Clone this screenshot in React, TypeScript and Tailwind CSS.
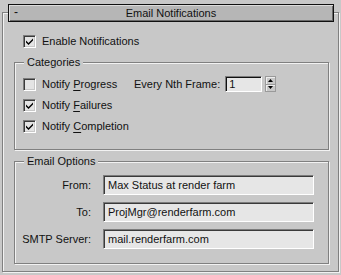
import React from "react";

const FONT = "font-['Liberation_Sans',Arial,sans-serif]";

function CheckBox({ checked }: { checked: boolean }) {
  return (
    <div className="w-[13px] h-[13px] shrink-0 bg-[#e4e4e4] border border-t-[#7c7c7c] border-l-[#7c7c7c] border-b-white border-r-white shadow-[inset_1px_1px_0_#3a3a3a,inset_-1px_-1px_0_#c8c8c8] flex items-center justify-center">
      {checked && (
        <svg width="9" height="9" viewBox="0 0 9 9">
          <path d="M1 3.5 L3.5 6 L8 1.5 L8 3.5 L3.5 8 L1 5.5 Z" fill="#000" />
        </svg>
      )}
    </div>
  );
}

function Option({ checked, before, mnemonic, after }: { checked: boolean; before: string; mnemonic: string; after: string }) {
  return (
    <div className="flex items-center gap-[6px] h-[16px]">
      <CheckBox checked={checked} />
      <span className="leading-none whitespace-nowrap">
        {before}
        {mnemonic && <span className="underline underline-offset-[2px]">{mnemonic}</span>}
        {after}
      </span>
    </div>
  );
}

function GroupBox({ title, className, children }: { title: string; className: string; children: React.ReactNode }) {
  return (
    <div className={`relative ml-[11px] w-[315px] border border-[#808080] shadow-[1px_1px_0_#f2f2f2,inset_1px_1px_0_#f2f2f2] ${className}`}>
      <span className="absolute -top-[7px] left-[9px] px-[3px] bg-[#c8c8c8] leading-[13px]">{title}</span>
      {children}
    </div>
  );
}

function TextField({ value }: { value: string }) {
  return (
    <div className="w-[211px] h-[20px] bg-[#e6e6e6] border border-t-[#7c7c7c] border-l-[#7c7c7c] border-b-white border-r-white shadow-[inset_1px_1px_0_#3a3a3a] flex items-center pl-[4px] leading-none">
      {value}
    </div>
  );
}

const FIELDS = [
  { label: "From:", value: "Max Status at render farm" },
  { label: "To:", value: "ProjMgr@renderfarm.com" },
  { label: "SMTP Server:", value: "mail.renderfarm.com" },
];

export default function App() {
  return (
    <div className={`w-[341px] h-[275px] bg-[#c8c8c8] pt-[12px] pl-[2px] pr-[2px] text-[11px] text-[#111] ${FONT}`}>
      <div className="h-[260px] border border-[#808080] shadow-[1px_1px_0_#f2f2f2,inset_1px_1px_0_#f2f2f2] flex flex-col">
        {/* rollout title */}
        <div className="-mt-[9px] ml-[5px] mr-[4px] h-[18px] bg-[#b6b6b6] border border-[#111] shadow-[inset_1px_1px_0_#dcdcdc,inset_-1px_-1px_0_#6a6a6a] flex items-center relative">
          <span className="absolute left-[5px] top-[1px] leading-none text-[12px]">-</span>
          <span className="flex-1 text-center leading-none text-[11px]">Email Notifications</span>
        </div>

        <div className="mt-[11px] ml-[20px]">
          <Option checked before="Enable Notifications" mnemonic="" after="" />
        </div>

        {/* Categories */}
        <GroupBox title="Categories" className="mt-[13px] h-[88px] pl-[8px] pt-[13px]">
          <div className="flex flex-col gap-[5px]">
            <div className="flex items-center">
              <div className="w-[111px]">
                <Option checked={false} before="Notify " mnemonic="P" after="rogress" />
              </div>
              <span className="leading-none whitespace-nowrap">Every Nth Frame:</span>
              <div className="ml-[5px] w-[37px] h-[16px] bg-[#e6e6e6] border border-t-[#7c7c7c] border-l-[#7c7c7c] border-b-white border-r-white shadow-[inset_1px_1px_0_#111] flex items-center pl-[3px] leading-none">
                1
              </div>
              <div className="ml-[3px] w-[11px] h-[16px] flex flex-col border border-[#9a9a9a] bg-[#c8c8c8]">
                <div className="flex-1 flex items-center justify-center border-b border-[#9a9a9a] shadow-[inset_1px_1px_0_#eee]">
                  <svg width="5" height="3" viewBox="0 0 5 3"><path d="M2.5 0 L5 3 L0 3 Z" fill="#000" /></svg>
                </div>
                <div className="flex-1 flex items-center justify-center shadow-[inset_1px_1px_0_#eee]">
                  <svg width="5" height="3" viewBox="0 0 5 3"><path d="M0 0 L5 0 L2.5 3 Z" fill="#000" /></svg>
                </div>
              </div>
            </div>
            <Option checked before="Notify " mnemonic="F" after="ailures" />
            <Option checked before="Notify " mnemonic="C" after="ompletion" />
          </div>
        </GroupBox>

        {/* Email options */}
        <GroupBox title="Email Options" className="mt-[11px] h-[103px] pt-[13px]">
          <div className="flex flex-col gap-[7px]">
            {FIELDS.map((f) => (
              <div key={f.label} className="flex items-center gap-[12px]">
                <span className="w-[76px] text-right leading-none whitespace-nowrap">{f.label}</span>
                <TextField value={f.value} />
              </div>
            ))}
          </div>
        </GroupBox>
      </div>
    </div>
  );
}
